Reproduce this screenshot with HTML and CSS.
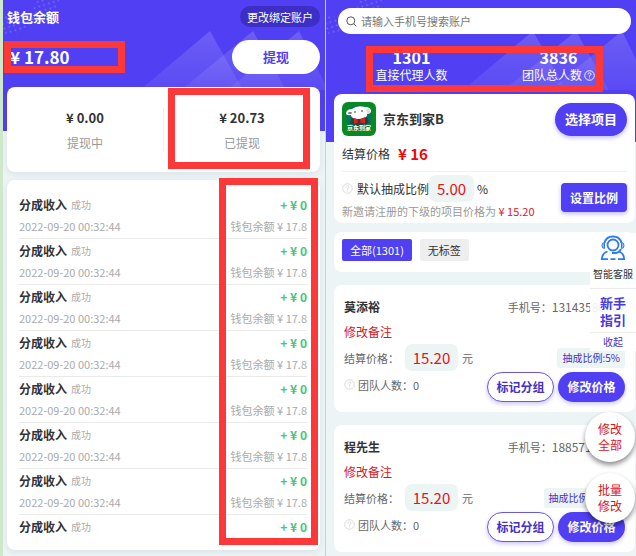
FILE: index.html
```html
<!DOCTYPE html>
<html lang="zh-CN">
<head>
	<meta charset="UTF-8">
	<meta name="viewport" content="width=device-width, initial-scale=1">
	<title>钱包余额</title>
	<link rel="stylesheet" href="styles.css">
</head>
<body>
<svg class="defs" width="0" height="0" aria-hidden="true">
	<defs>
		<linearGradient id="peak" x1="0" y1="0" x2="0" y2="1">
			<stop offset="0" stop-color="#fff" stop-opacity=".16"/>
			<stop offset="1" stop-color="#fff" stop-opacity=".06"/>
		</linearGradient>
		<pattern id="dot" width="5" height="5" patternUnits="userSpaceOnUse" patternTransform="rotate(-18)">
			<circle cx="2.500" cy="2.500" r=".9" fill="#7b6cf8"/>
		</pattern>
		<symbol id="decor" viewBox="0 0 322 90">
			<path d="M32 0h24q-2 12-16 18T14 34Q4 36 0 32V14Q10 20 22 14T32 0z" fill="url(#dot)"/>
			<path d="M207 31L137 90H240z" fill="url(#peak)"/>
			<path d="M250 31L178 90H283z" fill="url(#peak)"/>
			<path d="M296 31L224 90H322V84z" fill="url(#peak)"/>
		</symbol>
		<symbol id="ask" viewBox="0 0 12 12">
			<circle cx="6" cy="6" r="5.2" fill="none" stroke="currentColor"/>
			<path d="M4.3 4.8Q4.4 3 6 3t1.7 1.6Q7.700 5.600 6 6.200V7.300M6 8.200v1" fill="none" stroke="currentColor"/>
		</symbol>
	</defs>
</svg>

<main class="wrap">
	<!-- 钱包 -->
	<section class="panel wallet">
		<div class="bg"><svg width="322" height="90" aria-hidden="true"><use href="#decor"/></svg></div>
		<header class="wallet-top">
			<h1>钱包余额</h1>
			<button type="button" class="bind">更改绑定账户</button>
		</header>
		<div class="balance">
			<div class="money">¥ 17.80<i class="mark mark-money"></i></div>
			<button type="button" class="cash">提现</button>
		</div>
		<div class="card total">
			<div class="total-item"><b>¥ 0.00</b><span>提现中</span></div>
			<div class="total-item"><b>¥ 20.73</b><span>已提现</span><i class="mark mark-total"></i></div>
		</div>
		<div class="card record">
			<ul>
				<li>
					<p class="line"><b>分成收入</b><small>成功</small><em>+ ¥ 0</em></p>
					<p class="info"><span>2022-09-20 00:32:44</span><span>钱包余额 ¥ 17.8</span></p>
				</li>
				<li>
					<p class="line"><b>分成收入</b><small>成功</small><em>+ ¥ 0</em></p>
					<p class="info"><span>2022-09-20 00:32:44</span><span>钱包余额 ¥ 17.8</span></p>
				</li>
				<li>
					<p class="line"><b>分成收入</b><small>成功</small><em>+ ¥ 0</em></p>
					<p class="info"><span>2022-09-20 00:32:44</span><span>钱包余额 ¥ 17.8</span></p>
				</li>
				<li>
					<p class="line"><b>分成收入</b><small>成功</small><em>+ ¥ 0</em></p>
					<p class="info"><span>2022-09-20 00:32:44</span><span>钱包余额 ¥ 17.8</span></p>
				</li>
				<li>
					<p class="line"><b>分成收入</b><small>成功</small><em>+ ¥ 0</em></p>
					<p class="info"><span>2022-09-20 00:32:44</span><span>钱包余额 ¥ 17.8</span></p>
				</li>
				<li>
					<p class="line"><b>分成收入</b><small>成功</small><em>+ ¥ 0</em></p>
					<p class="info"><span>2022-09-20 00:32:44</span><span>钱包余额 ¥ 17.8</span></p>
				</li>
				<li>
					<p class="line"><b>分成收入</b><small>成功</small><em>+ ¥ 0</em></p>
					<p class="info"><span>2022-09-20 00:32:44</span><span>钱包余额 ¥ 17.8</span></p>
				</li>
				<li>
					<p class="line"><b>分成收入</b><small>成功</small><em>+ ¥ 0</em></p>
				</li>
			</ul>
			<i class="mark mark-record"></i>
		</div>
	</section>

	<!-- 代理 -->
	<section class="panel agent">
		<div class="bg"><svg width="322" height="90" aria-hidden="true"><use href="#decor"/></svg></div>
		<label class="search">
			<svg width="11" height="11" viewBox="0 0 11 11" aria-hidden="true"><circle cx="4.800" cy="4.800" r="4" fill="none" stroke="#555"/><path d="M7.800 7.800L10.300 10.300" stroke="#555"/></svg>
			<input type="search" placeholder="请输入手机号搜索账户" aria-label="搜索账户">
		</label>
		<div class="count">
			<div class="count-item"><b>1301</b><span>直接代理人数</span></div>
			<div class="count-item"><b>3836</b><span>团队总人数<svg class="ask" aria-hidden="true"><use href="#ask"/></svg></span></div>
			<i class="mark mark-count"></i>
		</div>

		<div class="card project">
			<div class="project-top">
				<svg class="logo" viewBox="0 0 34 34" aria-hidden="true">
					<rect width="34" height="34" rx="6" fill="#078a24"/>
					<circle cx="17" cy="16" r="13" fill="#08745a"/>
					<path d="M11 12h13l3 9q-10 6-19 0z" fill="#174b3d"/>
					<path d="M4 11Q5 7 10 7Q15 3 23 5Q29 5 29 9Q29 12 25 12Q26 15 21 16Q16 18 11 16Q9 15 9 13Q4 14 4 11z" fill="#fff"/>
					<path d="M24 7q4-1 4 2t-3 2z" fill="#e3ded9"/>
					<circle cx="13" cy="10" r=".8" fill="#222"/><circle cx="20" cy="9" r=".8" fill="#222"/>
					<ellipse cx="8" cy="11" rx="2" ry="1" fill="#777"/>
					<path d="M12 16l5 2 6-3v7l-6-2-5 2z" fill="#d52229"/>
					<circle cx="17" cy="19" r="1.500" fill="#8c1116"/>
					<text x="17" y="28" text-anchor="middle" class="logo-text">京东到家</text>
				</svg>
				<h2>京东到家B</h2>
				<button type="button" class="choose">选择项目</button>
			</div>
			<p class="price">结算价格<b>¥ 16</b></p>
			<div class="ratio">
				<div class="ratio-text">
					<p class="ratio-line">
						<svg class="ask" aria-hidden="true"><use href="#ask"/></svg>
						<label for="ratio">默认抽成比例</label>
						<input id="ratio" class="num num-s" type="text" value="5.00">
						<span>%</span>
					</p>
					<p class="tip">新邀请注册的下级的项目价格为 <b>¥ 15.20</b></p>
				</div>
				<button type="button" class="set">设置比例</button>
			</div>
		</div>

		<nav class="card tabs">
			<button type="button" class="on">全部(1301)</button>
			<button type="button">无标签</button>
		</nav>

		<article class="card user">
			<div class="user-top"><h3>莫添裕</h3><span>手机号：</span><span class="tel">13143580407</span></div>
			<a href="#" class="note">修改备注</a>
			<div class="user-price">
				<label for="price1">结算价格：</label>
				<input id="price1" class="num" type="text" value="15.20">
				<span>元</span>
				<em>抽成比例:5%</em>
			</div>
			<div class="user-foot">
				<svg class="ask" aria-hidden="true"><use href="#ask"/></svg>
				<span>团队人数：0</span>
				<button type="button" class="group">标记分组</button>
				<button type="button" class="edit">修改价格</button>
			</div>
		</article>

		<article class="card user">
			<div class="user-top"><h3>程先生</h3><span>手机号：</span><span class="tel">18857100000</span></div>
			<a href="#" class="note">修改备注</a>
			<div class="user-price">
				<label for="price2">结算价格：</label>
				<input id="price2" class="num" type="text" value="15.20">
				<span>元</span>
				<em>抽成比例:5.00%</em>
			</div>
			<div class="user-foot">
				<svg class="ask" aria-hidden="true"><use href="#ask"/></svg>
				<span>团队人数：0</span>
				<button type="button" class="group">标记分组</button>
				<button type="button" class="edit">修改价格</button>
			</div>
		</article>

		<!-- 右侧悬浮 -->
		<aside class="side">
			<a href="#" class="service">
				<svg width="26" height="26" viewBox="0 0 26 26" fill="none" stroke="#2f7cf0" stroke-width="1.800" aria-hidden="true">
					<circle cx="13" cy="10" r="5.500"/>
					<path d="M4.500 8Q6 1.500 13 1.500T21.500 8"/>
					<path d="M4.500 7.500q-2.500 0-2.500 3t2.500 3zM21.500 7.500q2.500 0 2.500 3t-2.500 3z" fill="#8dbcff" stroke-width="1"/>
					<path d="M21 14q-2 4-6 4h-3"/>
					<path d="M7.500 16.500Q2 18 1.800 24.200H8M18.500 16.500Q24 18 24.200 24.200H18M10.500 24.200h5"/>
				</svg>
				<span>智能客服</span>
			</a>
			<a href="#" class="guide">新手<br>指引</a>
			<a href="#" class="fold">收起</a>
		</aside>
		<div class="round">
			<button type="button">修改<br>全部</button>
			<button type="button">批量<br>修改</button>
		</div>
	</section>
</main>
</body>
</html>
```
FILE: styles.css
```css
* {
	margin: 0;
	padding: 0;
	box-sizing: border-box;
	list-style: none;
}
body {
	font-family: "Noto Sans CJK SC", "Noto Sans", sans-serif;
	font-size: 12px;
	line-height: 20px;
	color: #333;
	background: #ecf4f5;
}
button, input {
	font-family: inherit;
	font-size: inherit;
	line-height: inherit;
	color: inherit;
	border: 0;
	outline: 0;
}
button {
	cursor: pointer;
	white-space: nowrap;
}
a {
	color: inherit;
	text-decoration: none;
}
em, i {
	font-style: normal;
}
.defs {
	position: absolute;
}
.wrap {
	display: grid;
	grid-template-columns: 325fr 311fr;
	min-height: 100vh;
}
.panel {
	position: relative;
	z-index: 0;
}
.bg {
	position: absolute;
	z-index: -1;
	top: 0;
	left: 0;
	right: 0;
	overflow: hidden;
	background: #503ff3;
}
.bg svg {
	display: block;
}
.card {
	position: relative;
	background: #fff;
	border-radius: 8px;
}
/* 红框标注 */
.mark {
	position: absolute;
	border: 7px solid #fc3838;
	pointer-events: none;
}

/* 钱包 */
.wallet {
	padding: 6px 5px 0 4px;
	border-left: 3px solid #cfe8cc;
}
.wallet .bg {
	height: 131px;
}
.wallet-top {
	display: flex;
	justify-content: space-between;
	align-items: center;
	color: #fff;
}
.wallet-top h1 {
	font-size: 13px;
	font-weight: bold;
}
.bind {
	height: 21px;
	padding: 0 7px;
	border-radius: 11px;
	font-size: 11px;
	color: #fff;
	background: #3d2fc6;
}
.balance {
	display: flex;
	justify-content: space-between;
	align-items: center;
	margin-top: 13px;
	color: #fff;
}
.money {
	position: relative;
	padding-left: 3px;
	font-size: 17px;
	font-weight: bold;
}
.mark-money {
	top: -6px;
	left: -3px;
	width: 121px;
	height: 32px;
}
.cash {
	width: 88px;
	height: 34px;
	border-radius: 17px;
	font-size: 13px;
	font-weight: bold;
	color: #503ff3;
	background: #fff;
}
.total {
	display: flex;
	height: 85px;
	margin-top: 13px;
	padding: 21px 0;
	box-shadow: 0 2px 6px rgba(80, 110, 120, .12);
}
.total-item {
	flex: 1;
	position: relative;
	display: flex;
	flex-direction: column;
	align-items: center;
	gap: 5px;
}
.total-item + .total-item {
	border-left: 1px solid #eee;
}
.total-item b {
	font-size: 13px;
}
.total-item span {
	color: #999;
}
.mark-total {
	top: -20px;
	right: 10px;
	bottom: -18px;
	left: 4px;
}
.record {
	margin-top: 8px;
	padding: 13px 13px 11px 12px;
	box-shadow: 0 2px 6px rgba(80, 110, 120, .12);
}
.record li + li {
	border-top: 1px solid #eaeaea;
}
.record p {
	display: flex;
	align-items: center;
}
.line {
	height: 24px;
}
.line small {
	margin-left: 4px;
	font-size: 10px;
	color: #aaa;
}
.line em {
	margin-left: auto;
	font-weight: bold;
	color: #43c67b;
}
.info {
	justify-content: space-between;
	padding-bottom: 3px;
	line-height: 18px;
	font-size: 11px;
	color: #aaa;
}
.mark-record {
	top: -2px;
	right: 2px;
	bottom: 5px;
	width: 99px;
}

/* 代理 */
.agent {
	padding: 8px 1px 4px 8px;
	border-left: 1px solid #c3d3cf;
}
.agent .bg {
	height: 142px;
}
.ask {
	flex: none;
	width: 11px;
	height: 11px;
	color: #d8d8d8;
}
.search {
	display: flex;
	align-items: center;
	gap: 4px;
	height: 26px;
	margin: 0 4px;
	padding: 0 8px;
	border-radius: 13px;
	background: #fff;
}
.search input {
	flex: 1;
	min-width: 0;
	font-size: 11px;
	background: none;
}
.search input::placeholder {
	color: #777;
}
.count {
	position: relative;
	display: grid;
	grid-template-columns: 1fr 1fr;
	margin-top: 14px;
	padding: 0 3px 0 4px;
	color: #fff;
}
.count-item {
	display: flex;
	flex-direction: column;
	align-items: center;
	line-height: 18px;
}
.count-item b {
	font-size: 16px;
}
.count-item span {
	display: flex;
	align-items: center;
	gap: 2px;
}
.count-item .ask {
	color: #fff;
}
.mark-count {
	top: -2px;
	right: 32px;
	bottom: -8px;
	left: 32px;
}
.project {
	margin-top: 10px;
	padding: 8px 8px 3px;
}
.project-top {
	display: flex;
	align-items: center;
}
.logo {
	width: 34px;
	height: 34px;
}
.logo-text {
	font-size: 6px;
	font-weight: bold;
	fill: #fff;
}
.project h2 {
	margin-left: 7px;
	font-size: 13px;
	font-weight: bold;
}
.choose {
	width: 72px;
	height: 33px;
	margin-left: auto;
	border-radius: 17px;
	font-size: 13px;
	font-weight: bold;
	color: #fff;
	background: #503ff3;
	box-shadow: 0 2px 4px rgba(80, 63, 243, .35);
}
.price {
	display: flex;
	align-items: center;
	height: 36px;
	border-bottom: 1px solid #f0f0f0;
}
.price b {
	margin-left: 8px;
	font-size: 15px;
	color: #f00808;
}
.ratio {
	display: flex;
	align-items: center;
	justify-content: space-between;
	padding-top: 3px;
}
.ratio-line {
	display: flex;
	align-items: center;
}
.ratio-line label {
	margin-left: 4px;
}
.ratio-line span {
	margin-left: 3px;
}
.num {
	width: 53px;
	height: 27px;
	border-radius: 7px;
	font-size: 15px;
	text-align: center;
	color: #e3131b;
	background: #ecf4f4;
}
.num-s {
	width: 45px;
}
.tip {
	line-height: 18px;
	font-size: 11px;
	white-space: nowrap;
	color: #999;
}
.tip b {
	font-weight: normal;
	color: #e3131b;
}
.set {
	width: 66px;
	height: 29px;
	border-radius: 4px;
	font-weight: bold;
	color: #fff;
	background: #503ff3;
	box-shadow: 0 2px 4px rgba(80, 63, 243, .35);
}
.tabs {
	display: flex;
	gap: 8px;
	margin-top: 9px;
	padding: 7px 8px 11px;
}
.tabs button {
	height: 22px;
	padding: 0 8px;
	border-radius: 2px;
	font-size: 11px;
	background: #eee;
}
.tabs .on {
	color: #fff;
	background: #503ff3;
}
.user {
	margin-top: 13px;
	padding: 12px 10px 10px;
	font-size: 11px;
	color: #666;
}
.user-top {
	display: flex;
}
.user-top h3 {
	margin-right: auto;
	font-size: 12px;
	font-weight: bold;
	color: #333;
}
.tel {
	font-size: 12px;
}
.note {
	display: block;
	width: 60px;
	margin-top: 5px;
	font-size: 12px;
	color: #d8141c;
}
.user-price {
	display: flex;
	align-items: center;
	margin-top: 2px;
}
.user-price .num {
	margin: 0 4px 0 6px;
}
.user-price em {
	height: 20px;
	margin-left: auto;
	padding: 0 5px;
	border-radius: 3px;
	font-size: 10px;
	color: #4332c4;
	background: #ecf4f4;
}
.user-foot {
	display: flex;
	align-items: center;
	height: 31px;
}
.user-foot span {
	margin: 0 auto 4px 3px;
}
.user-foot .ask {
	margin-bottom: 4px;
}
.user-foot button {
	width: 67px;
	height: 30px;
	border-radius: 15px;
	font-size: 12px;
	font-weight: bold;
	box-shadow: 0 2px 4px rgba(80, 63, 243, .3);
}
.user-foot .group {
	margin-right: 4px;
	border: 1px solid #6a5ad8;
	color: #4332c4;
	background: #fff;
}
.user-foot .edit {
	color: #fff;
	background: #503ff3;
}

/* 悬浮 */
.side {
	position: absolute;
	top: 233px;
	right: 0;
	width: 46px;
	background: rgba(255, 255, 255, .9);
	text-align: center;
}
.side a {
	display: block;
}
.service {
	height: 55px;
	padding-top: 2px;
	font-size: 10px;
}
.service svg {
	display: block;
	margin: 0 auto;
}
.service span {
	display: block;
	line-height: 26px;
}
.side .guide {
	padding: 5px 0 4px;
	border: 1px solid #ececec;
	border-width: 1px 0;
	line-height: 17px;
	font-size: 13px;
	font-weight: bold;
	color: #4a38e0;
}
.fold {
	line-height: 18px;
	font-size: 10px;
	color: #4332c4;
}
.round {
	position: absolute;
	top: 412px;
	right: 1px;
	display: grid;
	gap: 11px;
}
.round button {
	width: 50px;
	height: 50px;
	border-radius: 50%;
	line-height: 16px;
	color: #d8141c;
	background: #fff;
	box-shadow: 0 3px 5px rgba(0, 0, 0, .45);
}
```
